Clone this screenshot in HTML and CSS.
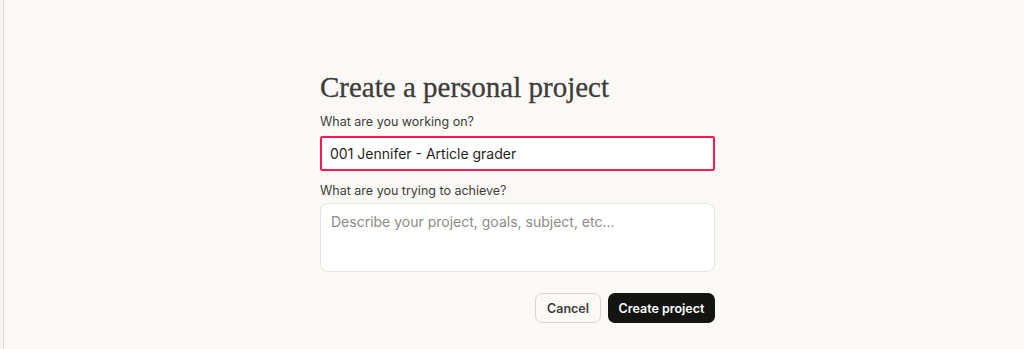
FILE: index.html
```html
<!DOCTYPE html>
<html>
<head>
  <meta charset="UTF-8">
  <title>Create a personal project</title>
  <link rel="stylesheet" href="styles.css">
</head>
<body>
  <div class="layout">
    <div class="sidebar"></div>
    <main class="main">
      <form class="project-form">
        <h1>Create a personal project</h1>

        <label for="project-name">What are you working on?</label>
        <input id="project-name" class="name-input" type="text" value="001 Jennifer - Article grader">

        <label for="project-goal" class="goal-label">What are you trying to achieve?</label>
        <textarea id="project-goal" class="goal-box" placeholder="Describe your project, goals, subject, etc..."></textarea>

        <div class="actions">
          <button type="button" class="btn-cancel">Cancel</button>
          <button type="submit" class="btn-create">Create project</button>
        </div>
      </form>
    </main>
  </div>
</body>
</html>
```

FILE: styles.css
```css
html, body {
  margin: 0;
  padding: 0;
  height: 100%;
  background: #faf9f5;
  font-family: "Inter", "Noto Sans", sans-serif;
  color: #3d3d3a;
}

.layout {
  display: flex;
  height: 100%;
}

.sidebar {
  width: 3px;
  border-right: 1px solid #e2e0d8;
  background: #f5f4ef;
}

.main {
  flex: 1;
  display: flex;
  justify-content: center;
  padding-left: 7px;
  padding-top: 70px;
  box-sizing: border-box;
}

.project-form {
  width: 395px;
  display: flex;
  flex-direction: column;
}

.project-form h1 {
  font-family: "Liberation Serif", "DejaVu Serif", serif;
  font-weight: normal;
  font-size: 29px;
  line-height: 34px;
  margin: 0 0 10px;
  color: #3d3d3a;
  -webkit-text-stroke: 0.3px #3d3d3a;
}

.project-form label {
  font-size: 12.5px;
  line-height: 16px;
  color: #3d3d3a;
  margin-bottom: 6px;
}

.project-form .goal-label {
  margin-bottom: 4px;
}

.name-input {
  height: 35px;
  box-sizing: border-box;
  border: 2px solid #ff1a55;
  border-radius: 2px;
  background: #fff;
  font-family: inherit;
  font-size: 14px;
  color: #1f1f1d;
  padding: 0 8px;
  outline: none;
  margin-bottom: 12px;
}

.goal-box {
  height: 69px;
  box-sizing: border-box;
  border: 1px solid #e6e4dc;
  border-radius: 8px;
  background: #fff;
  font-family: inherit;
  font-size: 14px;
  padding: 9px 10px;
  resize: none;
  outline: none;
}
.goal-box::placeholder {
  color: #8c8b86;
}

.actions {
  display: flex;
  justify-content: flex-end;
  gap: 7px;
  margin-top: 21px;
}

.btn-cancel, .btn-create {
  height: 30px;
  border-radius: 7px;
  font-family: inherit;
  font-size: 12.5px;
  font-weight: 600;
  cursor: pointer;
}

.btn-cancel {
  width: 66px;
  background: #faf9f5;
  border: 1px solid #d9d7cf;
  color: #3d3d3a;
}

.btn-create {
  width: 107px;
  background: #141413;
  border: none;
  color: #fff;
}
```
